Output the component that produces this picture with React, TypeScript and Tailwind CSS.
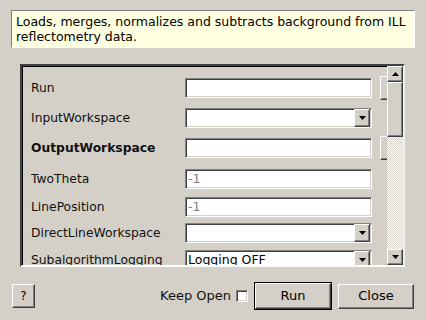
import type { ReactNode } from 'react'

const sunken =
  'border border-t-[#808080] border-l-[#808080] border-b-white border-r-white shadow-[inset_1px_1px_0_#404040,inset_-1px_-1px_0_#d4d0c8]'
const raised =
  'border border-t-white border-l-white border-b-[#404040] border-r-[#404040] shadow-[inset_-1px_-1px_0_#808080,inset_1px_1px_0_#d4d0c8]'

const DownArrow = () => (
  <svg width="7" height="4" viewBox="0 0 7 4">
    <path d="M0 0h7L3.5 4z" fill="#000" />
  </svg>
)

const UpArrow = () => (
  <svg width="7" height="4" viewBox="0 0 7 4">
    <path d="M0 4h7L3.5 0z" fill="#000" />
  </svg>
)

const TextBox = ({ value }: { value?: string }) => (
  <div className={`flex h-[20px] w-[187px] shrink-0 items-center bg-white pl-[2px] text-[12.5px] text-[#808080] ${sunken}`}>
    {value}
  </div>
)

const Combo = ({ value }: { value?: string }) => (
  <div className={`flex h-[20px] w-[187px] shrink-0 items-center justify-between bg-white pl-[2px] pr-[1px] text-[12.5px] text-black ${sunken}`}>
    <span className="leading-none">{value}</span>
    <div className={`flex h-[18px] w-[16px] items-center justify-center bg-[#d4d0c8] ${raised}`}>
      <DownArrow />
    </div>
  </div>
)

const Row = ({
  label,
  bold,
  h,
  side,
  children,
}: {
  label: string
  bold?: boolean
  h: string
  side?: boolean
  children: ReactNode
}) => (
  <div className={`flex shrink-0 items-center ${h}`}>
    <div className={`w-[154px] shrink-0 text-[12.3px] text-[#111] ${bold ? 'font-bold' : ''}`}>{label}</div>
    {children}
    {side && <div className={`ml-[8px] h-[24px] w-[24px] shrink-0 bg-[#d4d0c8] ${raised}`} />}
  </div>
)

export default function App() {
  return (
    <div className="flex h-[320px] w-[426px] flex-col bg-[#d4d0c8] font-['DejaVu_Sans',sans-serif] text-black">
      <div className="mx-[11px] mt-[10px] h-[38px] border border-t-[#808080] border-l-[#808080] border-b-white border-r-white bg-[#ffffe1] py-[3px] pl-[4px] text-[12.5px] leading-[15px]">
        Loads, merges, normalizes and subtracts background from ILL reflectometry data.
      </div>

      <div className="ml-[20px] mt-[16px] flex h-[203px] w-[385px] border-2 border-t-[#404040] border-l-[#404040] border-b-white border-r-[#f0f0f0] shadow-[inset_1px_1px_0_#000]">
        <div className="flex min-w-0 flex-1 flex-col overflow-hidden pl-[9px] pt-[7px]">
          <Row label="Run" h="h-[30px]" side>
            <TextBox />
          </Row>
          <Row label="InputWorkspace" h="h-[30px]">
            <Combo />
          </Row>
          <Row label="OutputWorkspace" bold h="h-[30px]" side>
            <TextBox />
          </Row>
          <Row label="TwoTheta" h="h-[32px]">
            <TextBox value="-1" />
          </Row>
          <Row label="LinePosition" h="h-[24px]">
            <TextBox value="-1" />
          </Row>
          <Row label="DirectLineWorkspace" h="h-[28px]">
            <Combo />
          </Row>
          <Row label="SubalgorithmLogging" h="h-[26px]">
            <Combo value="Logging OFF" />
          </Row>
        </div>

        <div className="flex w-[16px] shrink-0 flex-col">
          <div className={`flex h-[16px] items-center justify-center bg-[#d4d0c8] ${raised}`}>
            <UpArrow />
          </div>
          <div className={`h-[55px] bg-[#d4d0c8] ${raised}`} />
          <div className="flex-1 bg-[repeating-conic-gradient(#ffffff_0_25%,#d4d0c8_0_50%)] bg-[length:2px_2px]" />
          <div className={`flex h-[16px] items-center justify-center bg-[#d4d0c8] ${raised}`}>
            <DownArrow />
          </div>
        </div>
      </div>

      <div className="mt-[15px] flex items-center px-[12px] text-[13px]">
        <button className={`h-[24px] w-[23px] bg-[#d4d0c8] text-[12px] ${raised}`}>?</button>
        <div className="flex-1" />
        <span className="text-[#111]">Keep Open</span>
        <div className={`ml-[5px] h-[12px] w-[12px] bg-white ${sunken}`} />
        <div className="ml-[6px] border border-black">
          <button className={`h-[26px] w-[76px] bg-[#d4d0c8] ${raised}`}>Run</button>
        </div>
        <button className={`ml-[6px] h-[25px] w-[76px] bg-[#d4d0c8] ${raised}`}>Close</button>
      </div>
    </div>
  )
}
